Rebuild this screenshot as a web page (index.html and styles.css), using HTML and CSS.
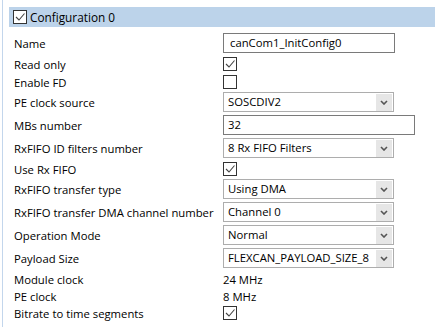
FILE: index.html
```html
<!DOCTYPE html>
<html lang="en">
<head>
  <meta charset="UTF-8" />
  <title>Configuration 0</title>
  <link rel="stylesheet" href="styles.css">
</head>
<body>

  <div class="panel">
    <div class="header">
      <span class="check on"><svg viewBox="0 0 12 12"><polyline points="2,6 5,9 10.5,2.5" /></svg></span>
      <span class="title">Configuration 0</span>
    </div>

    <div class="row">
      <span class="label">Name</span>
      <div class="field">canCom1_InitConfig0</div>
    </div>
    <div class="row short">
      <span class="label">Read only</span>
      <span class="check on"><svg viewBox="0 0 12 12"><polyline points="2,6 5,9 10.5,2.5" /></svg></span>
    </div>
    <div class="row short">
      <span class="label">Enable FD</span>
      <span class="check"></span>
    </div>
    <div class="row">
      <span class="label">PE clock source</span>
      <div class="select">SOSCDIV2<span class="arrow"><svg viewBox="0 0 8 5"><polyline points="1,1 4,4 7,1" /></svg></span></div>
    </div>
    <div class="row">
      <span class="label">MBs number</span>
      <div class="field wide">32</div>
    </div>
    <div class="row">
      <span class="label">RxFIFO ID filters number</span>
      <div class="select">8 Rx FIFO Filters<span class="arrow"><svg viewBox="0 0 8 5"><polyline points="1,1 4,4 7,1" /></svg></span></div>
    </div>
    <div class="row short">
      <span class="label">Use Rx FIFO</span>
      <span class="check on"><svg viewBox="0 0 12 12"><polyline points="2,6 5,9 10.5,2.5" /></svg></span>
    </div>
    <div class="row">
      <span class="label">RxFIFO transfer type</span>
      <div class="select">Using DMA<span class="arrow"><svg viewBox="0 0 8 5"><polyline points="1,1 4,4 7,1" /></svg></span></div>
    </div>
    <div class="row">
      <span class="label">RxFIFO transfer DMA channel number</span>
      <div class="select">Channel 0<span class="arrow"><svg viewBox="0 0 8 5"><polyline points="1,1 4,4 7,1" /></svg></span></div>
    </div>
    <div class="row">
      <span class="label">Operation Mode</span>
      <div class="select">Normal<span class="arrow"><svg viewBox="0 0 8 5"><polyline points="1,1 4,4 7,1" /></svg></span></div>
    </div>
    <div class="row">
      <span class="label">Payload Size</span>
      <div class="select">FLEXCAN_PAYLOAD_SIZE_8<span class="arrow"><svg viewBox="0 0 8 5"><polyline points="1,1 4,4 7,1" /></svg></span></div>
    </div>
    <div class="row text">
      <span class="label">Module clock</span>
      <span class="value">24 MHz</span>
    </div>
    <div class="row text">
      <span class="label">PE clock</span>
      <span class="value">8 MHz</span>
    </div>
    <div class="row short">
      <span class="label">Bitrate to time segments</span>
      <span class="check on"><svg viewBox="0 0 12 12"><polyline points="2,6 5,9 10.5,2.5" /></svg></span>
    </div>
  </div>

</body>
</html>
```

FILE: styles.css
```css
body {
  margin: 0;
  background: white;
  font-family: 'Segoe UI', 'Open Sans', sans-serif;
  font-size: 11.3px;
  color: #000;
}
.panel {
  margin-left: 2px;
  border-left: 1px solid #c3d6ec;
  padding-top: 7px;
  height: 320px;
}
.header {
  margin-left: 6px;
  height: 20px;
  background: #bcd3ea;
  display: flex;
  align-items: center;
  padding-left: 4px;
  margin-bottom: 6px;
}
.header .check {
  margin-right: 3px;
}
.title {
  font-size: 11.8px;
}
.row {
  display: flex;
  align-items: center;
  height: 20px;
  margin-bottom: 3px;
  padding-left: 11px;
}
.row.short {
  height: 16px;
  margin-bottom: 2px;
}
.row.text {
  height: 17px;
  margin-bottom: 0;
}
.label {
  width: 209px;
  flex-shrink: 0;
  white-space: nowrap;
}
.check {
  box-sizing: border-box;
  width: 14px;
  height: 14px;
  border: 1px solid #333;
  background: white;
  display: inline-flex;
}
.check svg {
  width: 12px;
  height: 12px;
  fill: none;
  stroke: #444;
  stroke-width: 1.1;
}
.field {
  box-sizing: border-box;
  width: 172px;
  height: 20px;
  border: 1px solid #7a7a7a;
  padding-left: 6px;
  line-height: 18px;
}
.field.wide {
  width: 192px;
  padding-left: 4px;
}
.select {
  box-sizing: border-box;
  width: 171px;
  height: 20px;
  border: 1px solid #adadad;
  padding-left: 4px;
  line-height: 18px;
  display: flex;
  justify-content: space-between;
  padding-right: 1px;
}
.arrow {
  width: 16px;
  height: 17px;
  margin-top: 1px;
  background: #e6e6e6;
  display: flex;
  align-items: center;
  justify-content: center;
}
.arrow svg {
  width: 8px;
  height: 5px;
  fill: none;
  stroke: #555;
  stroke-width: 1.6;
}
```
